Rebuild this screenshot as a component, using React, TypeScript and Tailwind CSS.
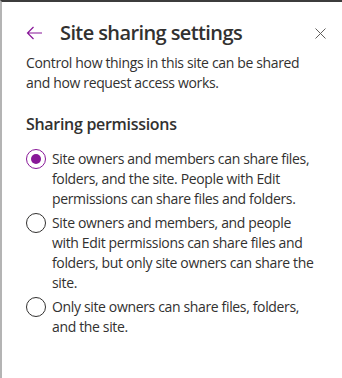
import React from "react";

const options = [
  "Site owners and members can share files, folders, and the site. People with Edit permissions can share files and folders.",
  "Site owners and members, and people with Edit permissions can share files and folders, but only site owners can share the site.",
  "Only site owners can share files, folders, and the site.",
];

export default function App() {
  return (
    <div
      className="w-[342px] h-[378px] bg-white border-t-2 border-t-[#3c3c3c] border-l-2 border-l-[#b4b4b4] text-[#323130] overflow-hidden"
      style={{ fontFamily: '"Open Sans", "Noto Sans", sans-serif' }}
    >
      <div className="flex items-center h-[34px] mt-[14px] pl-[24px] pr-[16px]">
        <svg width="17" height="14" viewBox="0 0 17 14" className="shrink-0">
          <path d="M16 7H1.5M7.5 1L1.5 7l6 6" fill="none" stroke="#881798" strokeWidth="1.2" />
        </svg>
        <div className="ml-[17px] text-[20px] font-semibold leading-[28px] tracking-[-0.6px]">Site sharing settings</div>
        <div className="flex-1" />
        <svg width="11" height="11" viewBox="0 0 11 11" className="shrink-0">
          <path d="M0.5 0.5l10 10M10.5 0.5l-10 10" fill="none" stroke="#605e5c" strokeWidth="1" />
        </svg>
      </div>
      <p className="pl-[24px] pr-[20px] mt-[3px] text-[14px] leading-[20px] tracking-[-0.35px]">
        Control how things in this site can be shared and how request access works.
      </p>
      <div className="pl-[24px] mt-[20px] text-[16px] font-semibold leading-[22px] tracking-[-0.3px]">Sharing permissions</div>
      <div className="flex flex-col gap-[4px] pl-[24px] pr-[22px] mt-[14px]">
        {options.map((t, i) => (
          <div key={i} className="flex items-start">
            <div
              className={
                i === 0
                  ? "shrink-0 w-[20px] h-[20px] rounded-full border border-[#881798] flex items-center justify-center"
                  : "shrink-0 w-[20px] h-[20px] rounded-full border border-[#323130]"
              }
            >
              {i === 0 && <div className="w-[10px] h-[10px] rounded-full bg-[#881798]" />}
            </div>
            <div className="ml-[6px] text-[14px] leading-[20px] tracking-[-0.35px]">{t}</div>
          </div>
        ))}
      </div>
    </div>
  );
}
